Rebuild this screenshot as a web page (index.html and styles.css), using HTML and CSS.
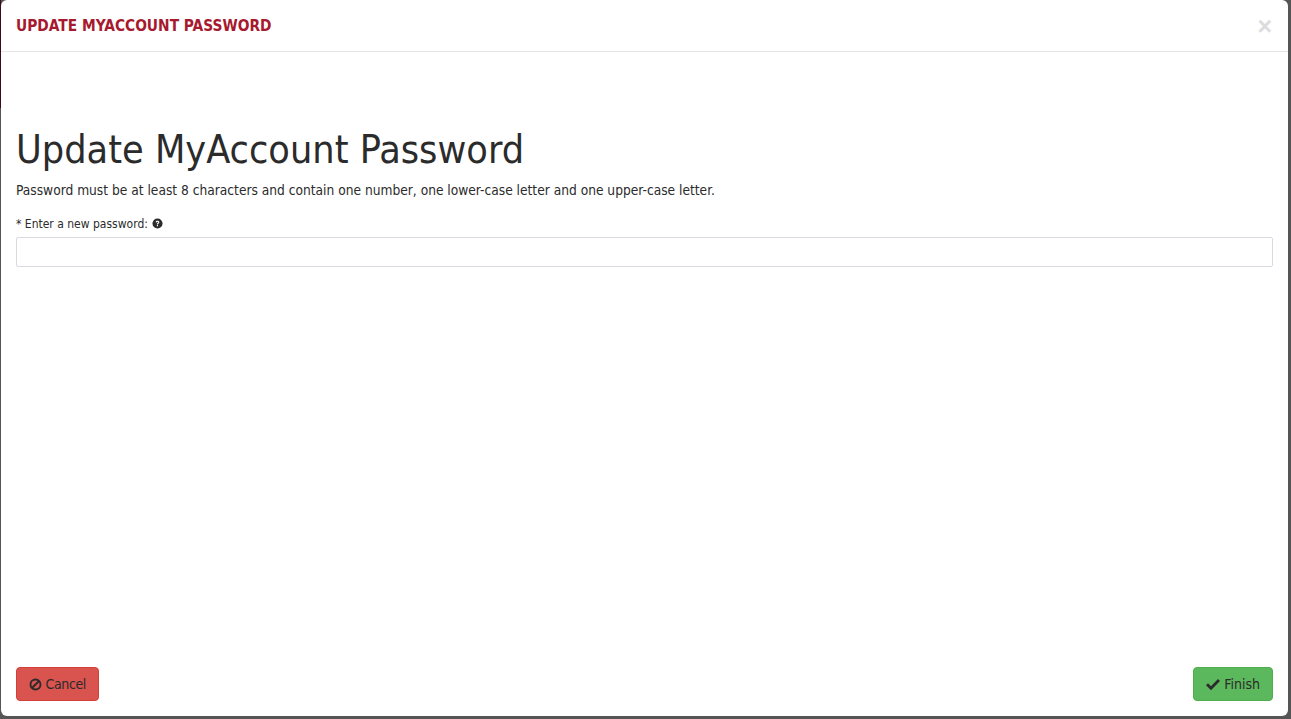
FILE: index.html
```html
<!DOCTYPE html>
<html lang="en">
<head>
	<meta charset="UTF-8">
	<title>Update MyAccount Password</title>
	<link rel="stylesheet" href="styles.css">
</head>
<body>
<div class="backdrop">
	<div class="modal">
		<div class="modal-header">
			<h4 class="modal-title">UPDATE MYACCOUNT PASSWORD</h4>
			<span class="close">&times;</span>
		</div>
		<div class="modal-body">
			<h1 class="page-title">Update MyAccount Password</h1>
			<p class="hint">Password must be at least 8 characters and contain one number, one lower-case letter and one upper-case letter.</p>
			<label class="field-label" for="pw">* Enter a new password:
				<svg class="help" viewBox="0 0 12 12" width="11" height="11"><circle cx="6" cy="6" r="5.5" fill="#2b2b2b"/><path d="M4 4.6C4.1 3.5 4.9 3 6 3c1.200 0 2 .7 2 1.600 0 1.300-1.500 1.300-1.500 2.400h-1.200c0-1.700 1.400-1.700 1.400-2.400 0-.3-.3-.5-.7-.5-.5 0-.7.300-.8.700z" fill="#fff"/><rect x="5.300" y="7.700" width="1.300" height="1.300" fill="#fff"/></svg>
			</label>
			<input class="field" id="pw" type="password">
		</div>
		<div class="modal-footer">
			<button class="btn btn-cancel">
				<svg viewBox="0 0 14 14" width="13" height="13"><circle cx="7" cy="7" r="5.400" fill="none" stroke="#2b2b2b" stroke-width="2"/><path d="M3.200 10.800l7.600-7.600" stroke="#2b2b2b" stroke-width="2"/></svg>
				Cancel
			</button>
			<button class="btn btn-finish">
				<svg viewBox="0 0 14 14" width="14" height="14"><path d="M1 7.200l4 4 8-8.200" fill="none" stroke="#2b2b2b" stroke-width="2.800"/></svg>
				Finish
			</button>
		</div>
	</div>
</div>
</body>
</html>
```

FILE: styles.css
```css
html,body{
	margin: 0;
	padding: 0;
	height: 100%;
	background-color: #555;
	font-family: "DejaVu Sans Condensed", "DejaVu Sans", sans-serif;
	color: #2b2b2b;
}
/* the page behind the modal only shows as a thin strip down the left side */
.backdrop{
	height: 100%;
	box-sizing: border-box;
	padding: 0 3px 3px 1px;
	background: linear-gradient(#3f0a14 108px, #555 108px) left top / 1px 100% no-repeat, #555;
	overflow: hidden;
}
.modal{
	height: 100%;
	display: flex;
	flex-direction: column;
	background-color: #fff;
	border-radius: 6px;
}
.modal-header{
	display: flex;
	justify-content: space-between;
	align-items: center;
	height: 51px;
	padding: 0 15px;
	border-bottom: 1px solid #e5e5e5;
}
.modal-title{
	margin: 0;
	font-size: 15.35px;
	font-weight: bold;
	color: #a6192e;
}
.close{
	margin-right: 1px;
	font-family: "Liberation Sans", sans-serif;
	font-size: 25px;
	line-height: 28px;
	font-weight: bold;
	color: #dcdcdc;
}
.modal-body{
	flex: 1;
	padding: 0 15px;
}
.page-title{
	margin: 74px 0 0;
	font-size: 39.2px;
	font-weight: normal;
	line-height: 48px;
}
.hint{
	margin: 7px 0 0;
	font-size: 13.65px;
	line-height: 18px;
}
.field-label{
	display: block;
	margin-top: 17px;
	font-size: 12px;
	line-height: 17px;
}
.help{
	margin-left: 1px;
	vertical-align: -1px;
}
.field{
	display: block;
	box-sizing: border-box;
	width: 100%;
	height: 30px;
	margin-top: 4px;
	border: 1px solid #d9d9e3;
	border-radius: 2px;
}
.modal-footer{
	display: flex;
	justify-content: space-between;
	padding: 0 15px 15px;
}
.btn{
	height: 34px;
	padding: 0 12px;
	border: 1px solid;
	border-radius: 4px;
	font-family: inherit;
	font-size: 14px;
	color: #2b2b2b;
}
.btn svg{
	vertical-align: -2px;
}
.btn-cancel{
	background-color: #d9534f;
	border-color: #d43f3a;
	letter-spacing: -.4px;
}
.btn-finish{
	background-color: #5cb85c;
	border-color: #4cae4c;
}
```
